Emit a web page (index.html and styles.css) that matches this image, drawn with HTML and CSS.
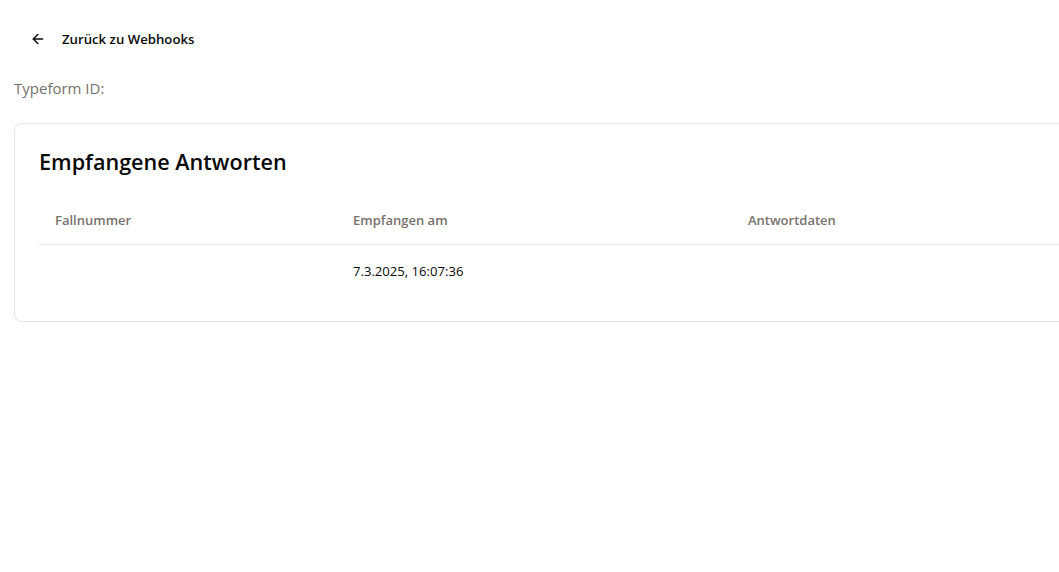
FILE: index.html
```html
<!DOCTYPE html>
<html lang="de">
<head>
<meta charset="utf-8">
<title>Webhook</title>
<link rel="stylesheet" href="styles.css">
</head>
<body>
<div class="page">
  <button class="back">
    <svg class="back-icon" width="16" height="16" viewBox="0 0 24 24" fill="none" stroke="currentColor" stroke-width="2" stroke-linecap="round" stroke-linejoin="round"><path d="M19 12H5"/><path d="M12 19l-7-7 7-7"/></svg>
    <span>Zurück zu Webhooks</span>
  </button>
  <p class="meta">Typeform ID:</p>
  <section class="card">
    <h2 class="card-title">Empfangene Antworten</h2>
    <table class="table">
      <thead>
        <tr>
          <th class="c1">Fallnummer</th>
          <th class="c2">Empfangen am</th>
          <th class="c3">Antwortdaten</th>
        </tr>
      </thead>
      <tbody>
        <tr>
          <td></td>
          <td>7.3.2025, 16:07:36</td>
          <td></td>
        </tr>
      </tbody>
    </table>
  </section>
</div>
</body>
</html>
```
FILE: styles.css
```css
html, body {
  margin: 0;
  padding: 0;
  background: #fff;
  overflow-x: hidden;
}
body {
  font-family: "Segoe UI", "Open Sans", "Noto Sans", sans-serif;
  color: #0a0a0a;
}
.page {
  padding: 22px 0 0 14px;
  width: 1300px;
}
.back {
  display: flex;
  align-items: center;
  gap: 16px;
  height: 34px;
  padding: 0 16px;
  border: 0;
  background: transparent;
  font-family: inherit;
  font-size: 13.2px;
  font-weight: 600;
  color: #0a0a0a;
  cursor: pointer;
}
.back-icon {
  display: block;
}
.meta {
  margin: 20px 0 23px;
  font-size: 15px;
  line-height: 24px;
  color: #78716c;
}
.card {
  border: 1px solid #e5e5e5;
  border-radius: 8px;
  box-shadow: 0 1px 2px rgba(0,0,0,0.04);
  padding: 24px;
  width: 1200px;
}
.card-title {
  margin: 0 0 20px;
  font-size: 21.6px;
  line-height: 28px;
  font-weight: 600;
}
.table {
  border-collapse: collapse;
  width: 100%;
  font-size: 13.1px;
}
.table th {
  text-align: left;
  font-weight: 600;
  font-size: 13px;
  color: #78716c;
  padding: 12px 16px;
  line-height: 24px;
  border-bottom: 1px solid #e5e5e5;
}
.table td {
  padding: 16px;
  line-height: 20px;
  color: #0a0a0a;
}
.c1 { width: 266px; }
.c2 { width: 363px; }
```
